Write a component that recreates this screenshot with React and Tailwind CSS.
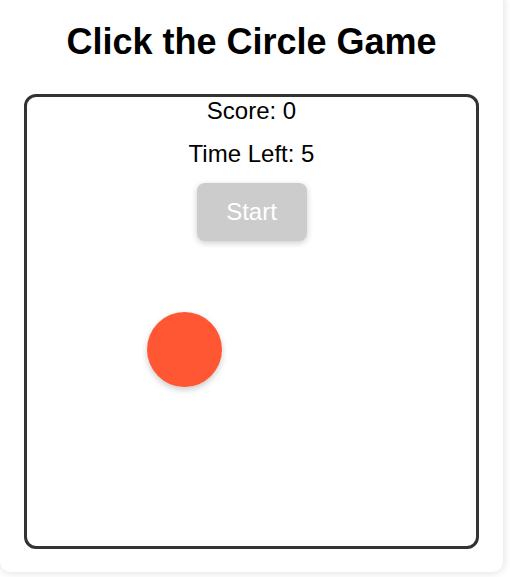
export default function App() {
  return (
    <div className="w-[510px] h-[577px] bg-white overflow-hidden" style={{ fontFamily: '"Liberation Sans", Arial, sans-serif' }}>
      <div className="w-[503px] h-[582px] -mt-[10px] bg-white rounded-[10px] shadow-[0_0_10px_rgba(0,0,0,0.15)] px-[24px] pt-[31px] box-border">
        <h1 className="text-[36px] font-bold leading-[41px] text-center text-black mb-[32px]">Click the Circle Game</h1>
        <div className="relative w-[455px] h-[455px] border-[3px] border-[#333] rounded-[12px] box-border flex flex-col items-center gap-[15px]">
          <p className="text-[24px] leading-[28px] text-black">Score: 0</p>
          <p className="text-[24px] leading-[28px] text-black">Time Left: 5</p>
          <button className="w-[110px] h-[58px] bg-[#ccc] text-white text-[24px] rounded-[8px] shadow-[0_2px_6px_rgba(0,0,0,0.2)]">Start</button>
          <div className="absolute left-[120px] top-[215px] w-[75px] h-[75px] rounded-full bg-[#FF5733] shadow-[0_3px_6px_rgba(0,0,0,0.2)]" />
        </div>
      </div>
    </div>
  );
}
